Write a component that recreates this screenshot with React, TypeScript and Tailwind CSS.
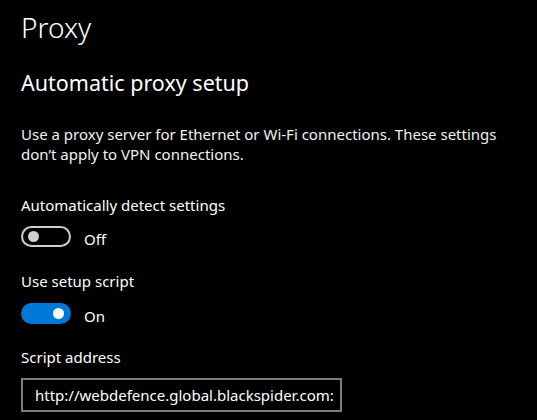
import { useState } from 'react';

function Toggle({ on, onChange }: { on: boolean; onChange: () => void }) {
  return (
    <div className="flex items-start gap-[13px]">
      <button
        onClick={onChange}
        className={
          on
            ? 'w-[50px] h-[21px] rounded-full bg-[#0078d7] border-2 border-[#0078d7] flex items-center justify-end pr-[5px]'
            : 'w-[50px] h-[21px] rounded-full bg-black border-2 border-[#cfcfcf] flex items-center justify-start pl-[5px]'
        }
      >
        <span className={on ? 'w-[11px] h-[11px] rounded-full bg-white' : 'w-[11px] h-[11px] rounded-full bg-[#cfcfcf]'} />
      </button>
      <span className="text-[15px] leading-[20px] mt-[3px] text-white">{on ? 'On' : 'Off'}</span>
    </div>
  );
}

export default function App() {
  const [autoDetect, setAutoDetect] = useState(false);
  const [useScript, setUseScript] = useState(true);

  return (
    <div
      className="w-[537px] h-[420px] bg-black text-white overflow-hidden pl-[21px] pt-[9px]"
      style={{ fontFamily: '"Noto Sans", "Open Sans", sans-serif' }}
    >
      <h1 className="text-[28px] leading-[36px] font-light">Proxy</h1>

      <h2 className="text-[21.5px] leading-[28px] mt-[24px]">Automatic proxy setup</h2>

      <p className="text-[15px] leading-[20px] mt-[27px] text-[#f2f2f2]">
        Use a proxy server for Ethernet or Wi-Fi connections. These settings
        <br />
        don’t apply to VPN connections.
      </p>

      <div className="mt-[31px] text-[15px] leading-[20px]">Automatically detect settings</div>
      <div className="mt-[11px]">
        <Toggle on={autoDetect} onChange={() => setAutoDetect(!autoDetect)} />
      </div>

      <div className="mt-[22px] text-[15px] leading-[20px]">Use setup script</div>
      <div className="mt-[12px]">
        <Toggle on={useScript} onChange={() => setUseScript(!useScript)} />
      </div>

      <div className="mt-[21px] text-[15px] leading-[20px]">Script address</div>
      <div className="mt-[11px] w-[321px] h-[34px] border-2 border-[#7d7d7d] flex items-center pl-[12px] pr-[6px] overflow-hidden">
        <span className="text-[15px] whitespace-nowrap overflow-hidden">http://webdefence.global.blackspider.com:</span>
      </div>
    </div>
  );
}
